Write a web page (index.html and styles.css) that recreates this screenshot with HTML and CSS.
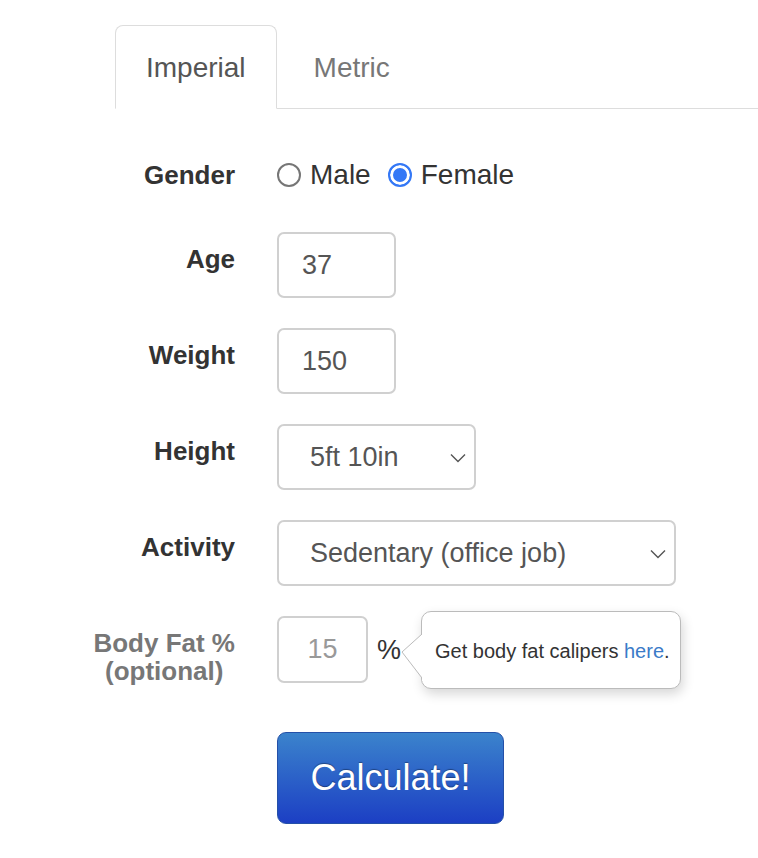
FILE: index.html
```html
<!DOCTYPE html>
<html>
<head>
<meta charset="utf-8">
<link rel="stylesheet" href="styles.css">
</head>
<body>
<div class="page">
  <div class="tabs">
    <div class="tab active">Imperial</div>
    <div class="tab">Metric</div>
  </div>
  <form class="form">
    <div class="row row-gender">
      <div class="label label-tight">Gender</div>
      <div class="radios">
        <label class="radio"><input type="radio" name="g"><span>Male</span></label>
        <label class="radio"><input type="radio" name="g" checked><span>Female</span></label>
      </div>
    </div>
    <div class="row">
      <div class="label">Age</div>
      <div class="ctrl"><input class="field field-short" type="text" value="37"></div>
    </div>
    <div class="row">
      <div class="label">Weight</div>
      <div class="ctrl"><input class="field field-short" type="text" value="150"></div>
    </div>
    <div class="row">
      <div class="label">Height</div>
      <div class="ctrl">
        <div class="select-wrap select-height">
          <select class="select"><option>5ft 10in</option></select>
          <svg class="chev" width="16" height="10" viewBox="0 0 16 10"><path d="M1 1.5 L8 8.5 L15 1.5" fill="none" stroke="#555" stroke-width="1.4"/></svg>
        </div>
      </div>
    </div>
    <div class="row">
      <div class="label">Activity</div>
      <div class="ctrl">
        <div class="select-wrap select-activity">
          <select class="select"><option>Sedentary (office job)</option></select>
          <svg class="chev" width="16" height="10" viewBox="0 0 16 10"><path d="M1 1.5 L8 8.5 L15 1.5" fill="none" stroke="#555" stroke-width="1.4"/></svg>
        </div>
      </div>
    </div>
    <div class="row row-fat">
      <div class="label label-fat"><span class="fat-text">Body Fat %<br>(optional)</span></div>
      <div class="ctrl ctrl-fat">
        <input class="field field-fat" type="text" placeholder="15">
        <span class="pct">%</span>
        <div class="tip">
          <svg class="tip-arrow" width="22" height="48" viewBox="0 0 22 48"><path d="M21 1 L1 19 L21 45" fill="#fff" stroke="#bbb" stroke-width="1"/><rect x="21" y="0" width="2" height="48" fill="#fff"/></svg>
          <span class="tip-text">Get body fat calipers <a href="#" class="tip-link">here</a>.</span>
        </div>
      </div>
    </div>
    <div class="row row-btn">
      <div></div>
      <div class="ctrl"><button type="button" class="btn">Calculate!</button></div>
    </div>
  </form>
</div>
</body>
</html>
```
FILE: styles.css
```css
html, body {
  margin: 0;
  padding: 0;
  background: #fff;
}
body {
  font-family: "Liberation Sans", Arial, sans-serif;
  color: #333;
}
.page {
  width: 758px;
}
.tabs {
  margin: 25px 0 0 115px;
  display: flex;
  border-bottom: 1px solid #ddd;
}
.tab {
  font-size: 28px;
  line-height: 40px;
  padding: 22px 30px 20px;
  border: 1px solid transparent;
  border-radius: 8px 8px 0 0;
  color: #777;
  margin-bottom: -1px;
}
.tab.active {
  color: #555;
  border-color: #ddd;
  border-bottom-color: #fff;
  background: #fff;
}
.tab + .tab {
  margin-left: 6px;
}
.form {
  padding-top: 51px;
}
.row {
  display: grid;
  grid-template-columns: 235px auto;
  column-gap: 42px;
  margin-bottom: 30px;
}
.row-gender {
  margin-bottom: 42px;
}
.label {
  font-size: 26px;
  font-weight: bold;
  line-height: 30px;
  text-align: right;
  padding-top: 12px;
  color: #333;
}
.label-tight {
  padding-top: 0;
}
.radios {
  display: flex;
  align-items: center;
  height: 30px;
  font-size: 28px;
  color: #333;
}
.radio {
  display: flex;
  align-items: center;
  margin-right: 17px;
}
.radio input {
  appearance: none;
  -webkit-appearance: none;
  margin: 0 9px 0 0;
  width: 24px;
  height: 24px;
  border-radius: 50%;
  border: 2px solid #767676;
  box-sizing: border-box;
  background: #fff;
}
.radio input:checked {
  border-color: #3478f6;
  background: #3478f6;
  box-shadow: inset 0 0 0 3px #fff;
}
.ctrl {
  display: flex;
  align-items: center;
}
.field {
  box-sizing: border-box;
  height: 66px;
  border: 2px solid #d0d0d0;
  border-radius: 7px;
  font-family: "Liberation Sans", Arial, sans-serif;
  font-size: 27px;
  color: #555;
  padding: 0 0 0 23px;
  outline: none;
  background: #fff;
}
.field-short {
  width: 119px;
}
.select-wrap {
  position: relative;
}
.select {
  appearance: none;
  -webkit-appearance: none;
  box-sizing: border-box;
  height: 66px;
  border: 2px solid #d0d0d0;
  border-radius: 7px;
  font-family: "Liberation Sans", Arial, sans-serif;
  font-size: 27px;
  color: #555;
  padding: 0 0 0 31px;
  background: #fff;
  outline: none;
}
.select-height .select {
  width: 199px;
}
.select-activity .select {
  width: 399px;
}
.chev {
  position: absolute;
  right: 10px;
  top: 29px;
  pointer-events: none;
}
.row-fat {
  margin-bottom: 47px;
}
.label-fat {
  display: flex;
  justify-content: flex-end;
  padding-top: 13px;
  line-height: 28px;
  color: #777;
}
.fat-text {
  display: inline-block;
  text-align: center;
}
.ctrl-fat {
  position: relative;
  align-items: flex-start;
}
.field-fat {
  width: 91px;
  height: 67px;
  padding-left: 0;
  text-align: center;
}
.field-fat::placeholder {
  color: #999;
}
.pct {
  font-size: 27px;
  line-height: 30px;
  color: #333;
  margin: 19px 0 0 9px;
}
.tip {
  position: absolute;
  left: 144px;
  top: -5px;
  width: 260px;
  height: 78px;
  box-sizing: border-box;
  border: 1px solid #bbb;
  border-radius: 10px;
  background: #fff;
  box-shadow: 2px 5px 12px rgba(0, 0, 0, 0.16);
  font-size: 20px;
  color: #333;
  display: flex;
  align-items: center;
  padding: 2px 0 0 13px;
  white-space: nowrap;
}
.tip-arrow {
  position: absolute;
  left: -21px;
  top: 21px;
}
.tip-link {
  color: #3a7bc8;
  text-decoration: none;
}
.btn {
  width: 227px;
  height: 92px;
  box-sizing: border-box;
  border: 1px solid #2450a8;
  border-radius: 9px;
  background: linear-gradient(to bottom, #3b83cc, #1c3fc4);
  color: #fff;
  font-family: "Liberation Sans", Arial, sans-serif;
  font-size: 36px;
  text-shadow: 0 -1px 1px rgba(0, 0, 0, 0.35);
  padding: 0;
}
```
